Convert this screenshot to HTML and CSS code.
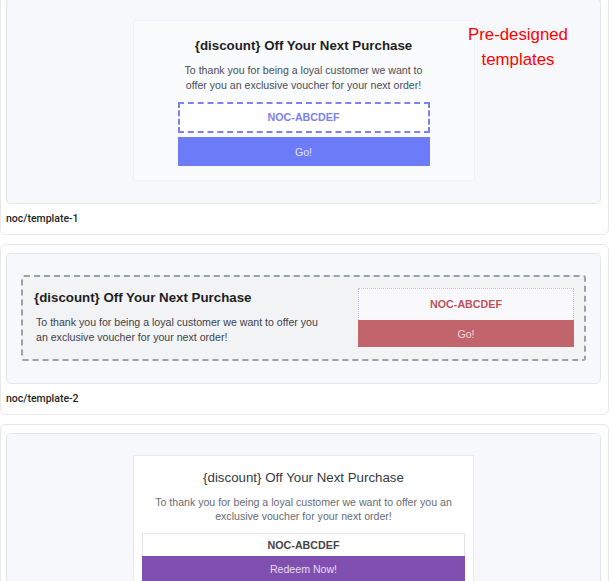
FILE: index.html
```html
<!DOCTYPE html>
<html lang="en">
<head>
  <meta charset="UTF-8" />
  <meta name="viewport" content="width=device-width, initial-scale=1.0"/>
  <title>Voucher Templates</title>
  <link rel="stylesheet" href="styles.css">
</head>
<body>

  <!-- Template list -->
  <div class="template-list">

    <!-- Template 1: centered card, dashed code -->
    <div class="template-card">
      <div class="preview">
        <div class="voucher voucher-1">
          <h3>{discount} Off Your Next Purchase</h3>
          <p>To thank you for being a loyal customer we want to offer you an exclusive voucher for your next order!</p>
          <div class="code">NOC-ABCDEF</div>
          <button class="go-btn">Go!</button>
        </div>
      </div>
      <div class="template-name">noc/template-1</div>
    </div>

    <!-- Template 2: wide banner with code on the right -->
    <div class="template-card">
      <div class="preview">
        <div class="voucher voucher-2">
          <div class="voucher-text">
            <h3>{discount} Off Your Next Purchase</h3>
            <p>To thank you for being a loyal customer we want to offer you an exclusive voucher for your next order!</p>
          </div>
          <div class="voucher-action">
            <div class="code">NOC-ABCDEF</div>
            <button class="go-btn">Go!</button>
          </div>
        </div>
      </div>
      <div class="template-name">noc/template-2</div>
    </div>

    <!-- Template 3: white card, purple button -->
    <div class="template-card">
      <div class="preview">
        <div class="voucher voucher-3">
          <h3>{discount} Off Your Next Purchase</h3>
          <p>To thank you for being a loyal customer we want to offer you an exclusive voucher for your next order!</p>
          <div class="code">NOC-ABCDEF</div>
          <button class="go-btn">Redeem Now!</button>
        </div>
      </div>
      <div class="template-name">noc/template-3</div>
    </div>

  </div>

  <div class="note">Pre-designed<br>templates</div>

</body>
</html>
```

FILE: styles.css
```css
body {
  font-family: "Liberation Sans", Arial, sans-serif;
  background: #fff;
  margin: 0;
  position: relative;
}
.template-list {
  width: 609px;
  margin-top: -11px;
}
.template-card {
  background: #fff;
  border: 1px solid #e7e8eb;
  border-radius: 6px;
  padding: 8px 7px 0 5px;
  margin-bottom: 9px;
}
.preview {
  background: #f7f8fb;
  border: 1px solid #e2e5ec;
  border-radius: 5px;
  padding: 21px 14px 22px;
}
.template-name {
  font-family: Roboto, "Noto Sans", sans-serif;
  font-size: 10.5px;
  font-weight: 500;
  line-height: 14px;
  color: #1f1f1f;
  padding: 8px 0;
}

/* shared voucher bits */
.voucher h3 {
  margin: 0;
  font-size: 13.3px;
  line-height: 16px;
}
.voucher p {
  margin: 9px 0 0;
  font-size: 10.6px;
  line-height: 15px;
}
.voucher .code {
  font-size: 10.7px;
  font-weight: bold;
  text-align: center;
}
.go-btn {
  display: block;
  width: 100%;
  border: none;
  font-family: inherit;
  font-size: 10.6px;
  cursor: pointer;
}

/* template 1 */
.voucher-1 {
  width: 252px;
  margin: 0 auto;
  padding: 17px 44px 14px;
  background: #fafbfc;
  border: 1px solid #eef0f4;
  border-radius: 3px;
  text-align: center;
}
.voucher-1 h3 {
  color: #1e1f23;
}
.voucher-1 p {
  color: #4a4e56;
}
.voucher-1 .code {
  margin-top: 9px;
  height: 27px;
  line-height: 27px;
  border: 2px dashed #7d81f4;
  background: #fff;
  color: #7b80f2;
}
.voucher-1 .go-btn {
  margin-top: 4px;
  height: 29px;
  background: #6c7bf7;
  color: #e2e6ff;
}

/* template 2 */
.voucher-2 {
  display: flex;
  align-items: center;
  gap: 30px;
  padding: 11px 10px 12px 11px;
  background: #f2f3f5;
  border: 2px dashed #9ca0a8;
  border-radius: 3px;
}
.voucher-text {
  flex: 1;
}
.voucher-2 h3 {
  color: #1e1f23;
}
.voucher-2 p {
  padding-left: 2px;
  color: #3e424a;
}
.voucher-action {
  width: 216px;
}
.voucher-2 .code {
  height: 31px;
  line-height: 31px;
  border: 1px dotted #c6bfd6;
  border-bottom: none;
  background: #f9f9fb;
  color: #b9525d;
}
.voucher-2 .go-btn {
  height: 27px;
  background: #c2646b;
  color: #f6d8da;
}

/* template 3 */
.voucher-3 {
  width: 323px;
  margin: 0 auto;
  padding: 14px 8px 8px;
  background: #fff;
  border: 1px solid #e8e8ea;
  text-align: center;
}
.voucher-3 h3 {
  font-weight: normal;
  color: #343a44;
}
.voucher-3 p {
  margin-top: 9px;
  line-height: 14px;
  color: #676c75;
}
.voucher-3 .code {
  margin-top: 10px;
  height: 22px;
  line-height: 22px;
  border: 1px solid #e4e4e6;
  border-bottom: none;
  color: #454545;
}
.voucher-3 .go-btn {
  height: 26px;
  background: #7f50b0;
  color: #e8dcf5;
}

/* annotation over the first preview */
.note {
  position: absolute;
  top: 22px;
  left: 458px;
  width: 120px;
  text-align: center;
  font-size: 16.8px;
  line-height: 25px;
  color: #ff0000;
}
```
